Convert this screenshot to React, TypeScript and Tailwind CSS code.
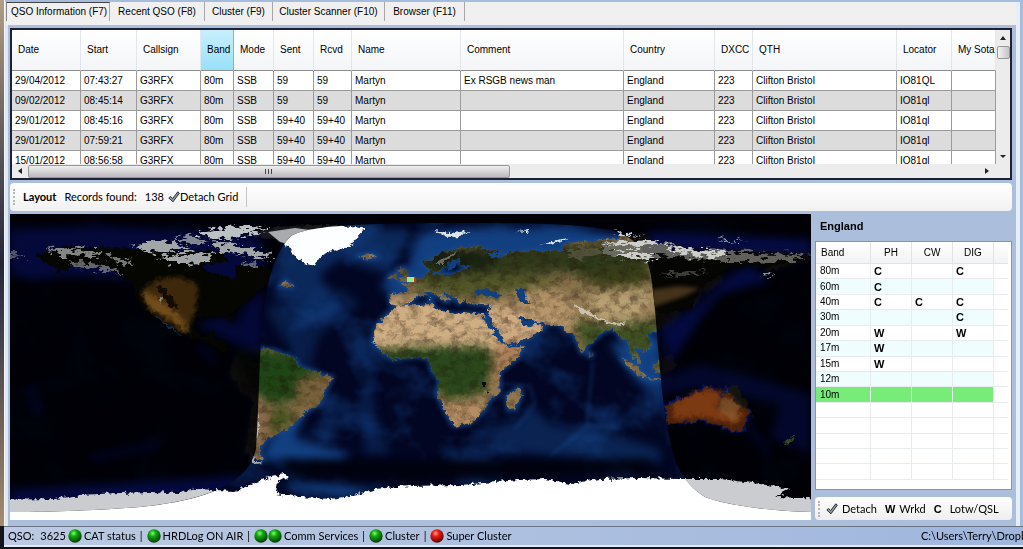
import { useState } from 'react';

interface Qso {
  id: number;
  date: string;
  start: string;
  rst: string;
  comment: string;
  locator: string;
}

interface BandStatus {
  band: string;
  ph: string;
  cw: string;
  dig: string;
}

const tabs = [
  { label: 'QSO Information (F7)', width: 'w-[104px]' },
  { label: 'Recent QSO (F8)', width: 'w-[95px]' },
  { label: 'Cluster (F9)', width: 'w-[68px]' },
  { label: 'Cluster Scanner (F10)', width: 'w-[112px]' },
  { label: 'Browser (F11)', width: 'w-[80px]' },
];

const columns = [
  { name: 'Date', width: 'w-[69px]' },
  { name: 'Start', width: 'w-[56px]' },
  { name: 'Callsign', width: 'w-[64px]' },
  { name: 'Band', width: 'w-[33px]' },
  { name: 'Mode', width: 'w-[40px]' },
  { name: 'Sent', width: 'w-[40px]' },
  { name: 'Rcvd', width: 'w-[38px]' },
  { name: 'Name', width: 'w-[109px]' },
  { name: 'Comment', width: 'w-[163px]' },
  { name: 'Country', width: 'w-[91px]' },
  { name: 'DXCC', width: 'w-[38px]' },
  { name: 'QTH', width: 'w-[144px]' },
  { name: 'Locator', width: 'w-[55px]' },
  { name: 'My Sota', width: '' },
];

const qsos: Qso[] = [
  { id: 1, date: '29/04/2012', start: '07:43:27', rst: '59', comment: 'Ex RSGB news man', locator: 'IO81QL' },
  { id: 2, date: '09/02/2012', start: '08:45:14', rst: '59', comment: '', locator: 'IO81ql' },
  { id: 3, date: '29/01/2012', start: '08:45:16', rst: '59+40', comment: '', locator: 'IO81ql' },
  { id: 4, date: '29/01/2012', start: '07:59:21', rst: '59+40', comment: '', locator: 'IO81ql' },
  { id: 5, date: '15/01/2012', start: '08:56:58', rst: '59+40', comment: '', locator: 'IO81ql' },
];

const bands: BandStatus[] = [
  { band: '80m', ph: 'C', cw: '', dig: 'C' },
  { band: '60m', ph: 'C', cw: '', dig: '' },
  { band: '40m', ph: 'C', cw: 'C', dig: 'C' },
  { band: '30m', ph: '', cw: '', dig: 'C' },
  { band: '20m', ph: 'W', cw: '', dig: 'W' },
  { band: '17m', ph: 'W', cw: '', dig: '' },
  { band: '15m', ph: 'W', cw: '', dig: '' },
  { band: '12m', ph: '', cw: '', dig: '' },
  { band: '10m', ph: '', cw: '', dig: '' },
  { band: '', ph: '', cw: '', dig: '' },
  { band: '', ph: '', cw: '', dig: '' },
  { band: '', ph: '', cw: '', dig: '' },
  { band: '', ph: '', cw: '', dig: '' },
  { band: '', ph: '', cw: '', dig: '' },
];

// Outlines as lon,lat pairs
const AFRICA = 'M-6,36 0,36 10,37 11,34 20,31 25,32 33,31 37,22 43,12 51,12 48,5 40,-3 40,-15 35,-20 33,-26 27,-33 20,-35 18,-32 14,-22 12,-16 13,-8 9,-1 9,4 4,6 -8,4.5 -13,9 -17,15 -16,21 -13,28 -9,32Z';
const EURASIA =
  'M-9,43 -9,37 -6,36 -1,37 3,42 7,43.5 10,44 12,42 16,38 18,40 13,45 19,42 22,37 24,40 27,37 36,36 35,31 39,22 43,13 53,17 60,23 56,26 51,24 48,30 56,27 62,25 67,25 70,21 73,20 77,8 80,13 87,21 92,22 95,16 98,15 99,8 103,1 103,5 100,13 105,9 109,12 106,20 114,22 121,28 121,32 118,38 125,39 127,35 129,37 130,42 140,49 140,54 136,55 143,59 155,59 162,61 156,51 163,57 170,60 180,63 180,69 160,70 140,72.5 130,71 113,74 105,78 88,75 70,73 68,68 55,69 44,67 40,64 33,67 41,67 30,70.5 22,70 14,67 5,61 8,58 12,56 17,61 22,65 22,60 28,60 20,55 10,54 10,57 8,57 8,54 2,51 -4,48.5 -1,46 -2,43.5Z';
const SOUTH_AMERICA = 'M-78,8 -72,12 -62,10 -52,5 -50,0 -35,-6 -39,-15 -41,-22 -48,-27 -53,-34 -58,-38 -65,-42 -68,-50 -66,-55 -74,-51 -73,-38 -70,-20 -76,-14 -81,-5 -80,0Z';
const ISLANDS =
  'M-5,50 1,51 0,53 -2,56 -3,58.5 -6,57 -3,54 -5,52Z M-10,52 -6,52 -6,55 -9,54Z M-24,65.5 -18,66.5 -14,65 -19,63.5Z M44,-25 43,-17 49,-12 50,-16 47,-25Z M95,5 100,2 106,-5 104,-6 98,0Z M80,9 82,7 80,6Z M109,1 117,7 119,1 115,-4 110,-3Z M106,-6 114,-7 114,-8 106,-7Z M9,41 9.5,39 8.5,39Z M-56,51 -53,47 -59,47.5Z';
const NORTH_AMERICA =
  'M-168,66 -156,71 -130,70 -110,68 -95,68 -85,68 -82,62 -94,60 -92,57 -82,53 -79,52 -78,60 -65,59 -56,52 -65,48 -70,43 -76,36 -81,31 -80,25 -83,30 -90,29.5 -97,28 -97,22 -94,18 -88,21 -88,16 -83,15 -83,10 -78,8 -85,10 -95,16 -105,20 -112,30 -110,23 -115,30 -121,35 -124,42 -124,48 -135,58 -150,60 -160,55 -158,58 -165,62Z';
const AUSTRALIA = 'M114,-22 122,-18 129,-15 132,-11 136,-12 136,-15 140,-17 142,-11 146,-19 153,-26 150,-37 145,-38 138,-35 131,-32 124,-33 115,-34Z';
const GREENLAND = 'M-73,78 -62,82 -45,83.5 -32,83.5 -20,82 -22,79 -24,76 -26,73 -30,70 -38,67 -41,64 -43,59.5 -49,61.5 -53,66 -54,70 -60,75Z';
const LAND = [AFRICA, EURASIA, SOUTH_AMERICA, ISLANDS].join(' ');

// Outlines in map pixels
const ANTARCTICA =
  'M-20,286 45,285 70,281 110,279 140,278 170,279 185,275 225,277 240,271 258,264 275,260 279,262 268,268 266,279 290,283 320,285 340,282 365,275 400,272 450,271 510,266 535,265 560,270 590,265 630,264 670,265 710,265 750,270 780,275 765,283 820,285 820,330 -20,330Z';
const NIGHT =
  'M0,0H801V298C760,297 715,291 695,283 C672,268 664,250 658,216 C651,180 648,130 645,96 C641,50 638,26 600,16 C570,10 520,9 460,9 C370,9 300,10 281,22 C265,38 255,70 252,110 C249,150 249,190 246,235 C238,272 190,287 130,293 C80,297 30,298 0,298Z';

function WorldMap() {
  const geo = 'translate(400.5 153) scale(2.225 -1.7)';
  return (
    <svg className="block h-[306px] w-full bg-[#01030f]" viewBox="0 0 801 306" preserveAspectRatio="none" role="img" aria-label="World map">
      <defs>
        <filter id="rough" x="-5%" y="-5%" width="110%" height="110%" colorInterpolationFilters="sRGB">
          <feTurbulence type="fractalNoise" baseFrequency="0.2" numOctaves="3" seed="4" />
          <feDisplacementMap in="SourceGraphic" scale="7" xChannelSelector="R" yChannelSelector="G" />
        </filter>
        <filter id="streaks" x="-5%" y="-5%" width="110%" height="110%" colorInterpolationFilters="sRGB">
          <feTurbulence type="fractalNoise" baseFrequency="0.12 0.26" numOctaves="3" seed="9" />
          <feDisplacementMap in="SourceGraphic" scale="16" xChannelSelector="R" yChannelSelector="G" />
          <feGaussianBlur stdDeviation="0.5" />
        </filter>
        <filter id="soft" x="-30%" y="-30%" width="160%" height="160%" colorInterpolationFilters="sRGB">
          <feGaussianBlur stdDeviation="5" />
        </filter>
        <filter id="coast" x="-20%" y="-20%" width="140%" height="140%" colorInterpolationFilters="sRGB">
          <feGaussianBlur stdDeviation="2" />
        </filter>
        <filter id="terrain" x="0" y="0" width="100%" height="100%" colorInterpolationFilters="sRGB">
          <feTurbulence type="fractalNoise" baseFrequency="0.1 0.16" numOctaves="4" seed="12" />
          <feColorMatrix values="0 0 0 0 0.1  0 0 0 0 0.06  0 0 0 0 0.02  2.4 0 0 0 -1" />
        </filter>
        <filter id="sea" x="0" y="0" width="100%" height="100%" colorInterpolationFilters="sRGB">
          <feTurbulence type="fractalNoise" baseFrequency="0.018 0.022" numOctaves="4" seed="21" />
          <feColorMatrix values="0 0 0 0 0.07  0 0 0 0 0.24  0 0 0 0 0.5  3.4 0 0 0 -1.6" />
        </filter>
        <clipPath id="land">
          <path d={LAND} transform={geo} />
        </clipPath>
        <clipPath id="night">
          <path d={NIGHT} />
        </clipPath>
      </defs>

      <rect width="801" height="306" fill="#020622" />
      <rect width="801" height="306" filter="url(#sea)" opacity="0.6" />
      <g filter="url(#soft)" fill="#123f80">
        <path d="M410,20 450,14 560,14 610,22 640,40 520,50 430,45 420,75 385,85 370,70 400,50Z" />
        <path d="M270,20 330,14 400,16 380,60 330,45 310,60 320,85 265,85Z" opacity="0.6" />
        <path d="M255,95 300,80 330,75 350,90 330,105 310,120 300,150 330,190 310,200 290,150Z" opacity="0.4" />
        <path d="M250,245 260,225 290,180 300,185 285,225 340,240 330,250 270,248Z" />
        <path d="M360,150 365,200 380,240 355,240 350,190Z" opacity="0.4" />
        <path d="M520,190 540,210 600,220 650,235 650,250 560,245 480,235 480,215 510,205Z" opacity="0.5" />
        <path d="M600,130 650,120 652,180 630,170 610,145Z" />
        <path d="M268,272 335,284 370,275 300,268Z" />
      </g>
      <path d="M583,146 577,212M490,170 520,172 525,190 505,215M540,242 577,212 610,213" fill="none" stroke="#2a62ad" strokeWidth="2" opacity="0.4" filter="url(#coast)" />
      <path d="M280,120 300,105 330,92M285,130 290,160 310,180" fill="none" stroke="#2a62ad" strokeWidth="6" opacity="0.15" filter="url(#soft)" />
      <path d="M270,246H640L650,258 530,262 400,268 280,262Z" fill="#01020e" filter="url(#soft)" />
      <g filter="url(#coast)">
        <path d={LAND} transform={geo} fill="#164b92" stroke="#164b92" strokeWidth="2" strokeLinejoin="round" opacity="0.85" />
      </g>

      <g filter="url(#rough)">
        <g clipPath="url(#land)">
          <rect width="801" height="306" fill="#8e7650" />
          <g filter="url(#soft)">
            {/* deserts */}
            <path d="M355,86 430,86 485,96 510,140 470,134 355,134Z" fill="#cfae83" />
            <path d="M470,88 510,95 550,115 500,140 480,120Z" fill="#cfab82" />
            <path d="M500,75 545,75 575,100 560,118 520,105Z" fill="#b6966a" />
            <path d="M575,80 640,75 645,90 620,110 590,108Z" fill="#b8a073" />
            {/* forest and savanna */}
            <path d="M355,137 400,133 475,132 488,150 470,180 440,188 415,165 370,158Z" fill="#2b481c" />
            <path d="M488,130 520,128 500,155 480,175 482,150Z" fill="#ab8058" />
            <path d="M418,188 470,184 480,205 450,225 430,210Z" fill="#b58d62" />
            <path d="M380,62 430,66 500,60 640,58 640,30 480,28 420,40Z" fill="#30391b" />
            <path d="M400,75 450,85 500,78 560,68 500,58 410,66Z" fill="#525628" />
            <path d="M560,60 640,52 640,70 590,74Z" fill="#3b4019" />
            <path d="M562,105 600,112 650,105 650,160 620,140 580,148Z" fill="#405225" />
            <path d="M420,28 480,40 490,50 430,60 410,40Z" fill="#172112" />
            <path d="M220,130 290,140 320,150 295,185 262,190 240,175Z" fill="#1f4415" />
            <path d="M285,168 325,150 318,185 290,200Z" fill="#77603a" />
            <path d="M245,190 262,188 258,238 245,245Z" fill="#8b6c4b" />
            <path d="M262,192 290,200 275,215 258,220Z" fill="#46501f" />
          </g>
          <rect width="801" height="306" filter="url(#terrain)" opacity="0.42" />
        </g>
        <g transform={geo} fill="#12407f">
          <path d="M28,45 30,42 38,41 41,42 37,45 33,46Z" />
          <path d="M47,46 52,46 51,42 54,37 50,37 48,42Z" />
          <path d="M17,56 20,59 22,65 18,62 16,58Z" />
          <path d="M32,30 35,28 43,14 41,14 34,25Z" />
          <path d="M49,30 51,27 56,26 54,24 50,26Z" />
        </g>
        <path d="M471,168h5v4h-5zM476,175l2,6 1,-1zM486,184l2,6h-1z" fill="#05080c" />
      </g>

      {/* ice and mountains */}
      <g filter="url(#rough)">
        <path d={GREENLAND} transform={geo} fill="#fdfeff" />
        <path d="M424,17 440,19 460,17 450,22 438,23Z M529,32 545,26 560,24 545,29Z M505,17 520,16 518,18Z" fill="#dfe6ea" />
        <path d="M562,89 570,93 590,105 612,110 618,106 612,112 592,108 570,97Z" fill="#c9c3b2" />
        <path d="M425,50 445,38 450,37 432,50Z" fill="#6c6b60" />
        <path d="M237,232 244,250 254,249 246,247Z M247,200 250,213 245,230Z" fill="#d4cfc7" opacity="0.8" />
      </g>
      <path d={ANTARCTICA} fill="#fff" filter="url(#rough)" />

      {/* night side */}
      <path d={NIGHT} fill="#000003" opacity="0.9" />
      <g clipPath="url(#night)">
        <g filter="url(#soft)" fill="#050d50">
          <path d="M0,15 90,12 250,20 255,60 200,75 120,65 60,62 20,66 0,60Z" opacity="0.7" />
          <path d="M185,110 215,102 225,112 235,90 255,75 252,140 215,125Z" opacity="0.65" />
          <path d="M645,165 690,150 730,160 801,180 801,240 760,225 770,190 700,175 645,180Z" opacity="0.5" />
          <path d="M650,115 690,90 720,60 740,52 760,66 710,80 690,105 660,150Z" opacity="0.8" />
          <path d="M640,18 801,26 801,40 640,34Z" opacity="0.9" />
          <path d="M0,276 240,262 240,280 0,290Z" opacity="0.8" />
        </g>
        <path d="M20,170 30,200M720,190 760,240M190,130 205,150M80,245 150,230" fill="none" stroke="#06105a" strokeWidth="8" opacity="0.3" filter="url(#soft)" />
        <g filter="url(#rough)">
          <path d={NORTH_AMERICA} transform={geo} fill="#050602" />
          <path d="M644,45 730,38 801,42 780,50 720,54 690,75 680,95 650,100 640,85Z" fill="#050503" />
        </g>
        <g filter="url(#rough)">
          <path d="M146,66 165,62 188,70 186,95 177,120 160,110 142,95 130,78Z" fill="#3d280c" filter="url(#coast)" />
          <path d="M133,76 143,82 155,90 172,104 178,120 160,104 138,94Z" fill="#80571f" filter="url(#coast)" opacity="0.8" />
          <path d="M146,74 154,72 164,88 170,96 160,92Z" fill="#140b04" />
          <path d="M150,84 153,82 152,90Z" fill="#9a8c78" />
          <path d="M145,100 160,112 172,122 158,114Z" fill="#1a3f66" opacity="0.7" />
        </g>
        <path d="M640,76 668,72 690,74 675,82 640,94Z" fill="#70502a" filter="url(#coast)" opacity="0.6" />
        <g filter="url(#streaks)" fill="#a2a6a6">
          <path d="M122,32 140,27 165,28 180,35 160,38 135,37Z" />
          <path d="M186,18 225,12 262,14 240,20 215,25 195,24Z" fill="#bcc1c4" />
          <path d="M146,44 170,40 205,39 200,48 165,49Z" />
          <path d="M200,28 225,30 250,36 262,44 245,42 215,38Z" />
          <path d="M165,22 185,23 198,29 180,31Z" opacity="0.8" />
          <path d="M38,36 60,34 98,38 85,42 50,41Z" opacity="0.8" />
          <path d="M98,41 110,44 124,50 112,50 100,46Z" opacity="0.7" />
          <path d="M58,47 90,50 118,60 90,56 65,53Z" opacity="0.6" />
          <path d="M0,38 20,42 15,45 0,42Z" opacity="0.5" />
          <path d="M228,50 245,48 248,52 235,53Z" opacity="0.6" />
        </g>
        <path d="M258,18 285,14 300,16 285,32 270,28Z" fill="#b8bbbd" opacity="0.9" />
        <g filter="url(#rough)">
          <path d={AUSTRALIA} transform={geo} fill="#4b220a" stroke="#050f56" strokeWidth="1" />
          <path d="M663,190 685,178 712,176 705,195 735,200 725,210 690,202 664,205Z" fill="#7c3a12" filter="url(#coast)" />
          <path d="M712,182 730,190 725,208 708,198Z" fill="#8a5d33" filter="url(#coast)" opacity="0.7" />
          <path d="M718,174 724,188 742,198 744,208 738,192 728,172Z" fill="#1c1b08" opacity="0.7" />
          <path d="M775,229 781,224 786,221 780,228 774,231Z" fill="#3a4a1a" />
        </g>
        <path d={ANTARCTICA} fill="#cbcccf" filter="url(#rough)" />
      </g>

      {/* Siberian snow crosses the terminator */}
      <g filter="url(#streaks)">
        <path d="M590,30 610,26 640,28 680,33 720,37 765,40 801,42 780,47 730,48 700,46 650,42 610,42 595,39Z" fill="#77766f" opacity="0.8" />
        <path d="M592,29 640,26 655,30 620,33Z M605,40 630,38 650,44 615,45Z M655,32 690,34 720,41 700,44 665,38Z" fill="#cdcdca" />
        <path d="M555,37 590,34 595,42 560,43Z" fill="#67614e" opacity="0.6" />
        <path d="M650,60 680,57 700,58 670,62Z" fill="#8e8e8a" opacity="0.4" />
        <path d="M606,18 622,21 632,23 615,22Z" fill="#c8ced2" />
        <path d="M704,25 735,27 720,29Z M756,63 763,56 760,65Z" fill="#8b8f92" />
      </g>

      {/* home marker */}
      <rect x="397" y="63" width="6" height="5" fill="#8df08f" />
      <rect x="403" y="63" width="2" height="5" fill="#e6e04a" />
      <rect x="404" y="63" width="2" height="5" fill="#d8261c" />
    </svg>
  );
}

function CheckIcon() {
  return (
    <svg className="h-3 w-3 shrink-0" viewBox="0 0 12 12">
      <path d="M0.8,7 2.6,5.4 4.6,7.6 9.8,0.8 11.3,2.2 5,10.8Z" fill="#8d99a6" stroke="#2e3338" strokeWidth="1" strokeLinejoin="round" />
    </svg>
  );
}

function Led({ color }: { color: 'green' | 'red' }) {
  const id = `led-${color}`;
  return (
    <svg className="h-[14px] w-[14px] shrink-0" viewBox="0 0 14 14">
      <defs>
        <radialGradient id={id} cx="0.4" cy="0.3" r="0.7">
          <stop offset="0" stopColor={color === 'green' ? '#7dff6a' : '#ff9a8a'} />
          <stop offset="0.35" stopColor={color === 'green' ? '#12a810' : '#ec1c10'} />
          <stop offset="1" stopColor={color === 'green' ? '#033c04' : '#5e0303'} />
        </radialGradient>
      </defs>
      <circle cx="7" cy="7" r="6.7" fill={`url(#${id})`} />
    </svg>
  );
}

function Grip() {
  return <span className="h-4 w-0 border-l-2 border-dotted border-[#b9b4b0]" />;
}

function Arrow({ d }: { d: string }) {
  return (
    <svg className="h-2 w-2" viewBox="0 0 8 8">
      <path d={d} fill="#222" />
    </svg>
  );
}

function QsoGrid() {
  return (
    <div className="flex flex-col border-2 border-[#1d2138] bg-white">
      <div className="flex h-[134px]">
        <div className="min-w-0 flex-1 overflow-hidden">
          <table className="w-full table-fixed border-separate border-spacing-0 whitespace-nowrap text-left">
            <thead>
              <tr className="h-[41px] bg-linear-to-b from-white to-[#f3f5f8]">
                {columns.map((col) => (
                  <th
                    key={col.name}
                    className={`${col.width} overflow-hidden border-r border-b border-b-[#8e8e8e] p-0 pl-1.5 font-normal ${
                      col.name === 'Band' ? 'border-r-[#7fb6d6] bg-linear-to-b from-[#c9effd] to-[#97e0fa]' : 'border-r-[#e3e6ea]'
                    }`}
                  >
                    {col.name}
                  </th>
                ))}
              </tr>
            </thead>
            <tbody>
              {qsos.map((qso, i) => (
                <tr key={qso.id} className={`h-5 ${i % 2 ? 'bg-[#dcdcdc]' : 'bg-white'}`}>
                  {[qso.date, qso.start, 'G3RFX', '80m', 'SSB', qso.rst, qso.rst, 'Martyn', qso.comment, 'England', '223', 'Clifton Bristol', qso.locator, ''].map(
                    (value, c) => (
                      <td key={c} className="overflow-hidden border-r border-b border-[#9b9b9b] p-0 pl-[3px]">
                        {value}
                      </td>
                    )
                  )}
                </tr>
              ))}
            </tbody>
          </table>
        </div>
        <div className="flex w-[14px] flex-col items-center bg-[#ececec]">
          <button className="flex h-4 w-full items-center justify-center" aria-label="Scroll up">
            <Arrow d="M4,2 7,6H1Z" />
          </button>
          <div className="h-[13px] w-[13px] rounded-xs border border-[#979797] bg-linear-to-r from-[#f4f4f4] to-[#c4c4c8]" />
          <button className="mt-auto flex h-4 w-full items-center justify-center" aria-label="Scroll down">
            <Arrow d="M1,3H7L4,6Z" />
          </button>
        </div>
      </div>
      <div className="flex h-[14px] items-center bg-[#ececec] pr-[15px]">
        <button className="flex w-4 items-center justify-center" aria-label="Scroll left">
          <Arrow d="M6,1V7L2,4Z" />
        </button>
        <div className="flex h-[13px] w-[49%] items-center justify-center gap-px rounded-xs border border-[#979797] bg-linear-to-b from-[#f0f0f0] to-[#bcb8be]">
          <span className="h-[5px] w-0.5 border-l border-[#444]" />
          <span className="h-[5px] w-0.5 border-l border-[#444]" />
          <span className="h-[5px] w-0.5 border-l border-[#444]" />
        </div>
        <button className="ml-auto flex w-4 items-center justify-center" aria-label="Scroll right">
          <Arrow d="M2,1V7L6,4Z" />
        </button>
      </div>
    </div>
  );
}

function BandPanel() {
  return (
    <aside className="flex w-[197px] shrink-0 flex-col">
      <h2 className="h-[27px] pt-1 pl-[5px] text-[11px] leading-4 font-bold">England</h2>
      <div className="h-[249px] overflow-hidden border border-[#8795ab] bg-white pr-[3px]">
        <table className="h-[238px] w-full table-fixed border-separate border-spacing-0 text-left leading-[14px]">
          <thead>
            <tr className="h-[22px] bg-linear-to-b from-white to-[#f1f2f4]">
              <th className="w-[55px] border-r border-b border-[#e0e3e8] p-0 pl-[5px] font-normal">Band</th>
              <th className="w-[41px] border-r border-b border-[#e0e3e8] p-0 text-center font-normal">PH</th>
              <th className="w-[41px] border-r border-b border-[#e0e3e8] p-0 text-center font-normal">CW</th>
              <th className="w-[41px] border-r border-b border-[#e0e3e8] p-0 text-center font-normal">DIG</th>
              <th className="border-b border-[#e0e3e8] p-0" />
            </tr>
          </thead>
          <tbody>
            {bands.map((row, i) => {
              const fill = row.band === '10m' ? 'bg-[#78ec78]' : row.band && i % 2 ? 'bg-[#effdff]' : '';
              return (
                <tr key={i} className="h-[15px]">
                  <td className={`border-r border-b border-[#e9ecef] p-0 pl-1 ${fill}`}>{row.band || '\u00a0'}</td>
                  {[row.ph, row.cw, row.dig].map((mark, c) => (
                    <td key={c} className={`border-r border-b border-[#e9ecef] p-0 pl-[3px] text-[11px] font-bold ${fill}`}>
                      {mark}
                    </td>
                  ))}
                  <td className="border-b border-[#e9ecef] p-0" />
                </tr>
              );
            })}
          </tbody>
        </table>
      </div>
      <div className="mt-[7px] flex h-[23px] items-center rounded-sm bg-linear-to-b from-white to-[#eeeeee] pl-[3px] font-[Lato,sans-serif] text-[11px]">
        <Grip />
        <button className="ml-[6px] flex items-center gap-1">
          <CheckIcon />
          Detach
        </button>
        <b className="ml-2 font-['Liberation_Sans',sans-serif]">W</b>
        <span className="ml-1">Wrkd</span>
        <b className="ml-2 font-['Liberation_Sans',sans-serif]">C</b>
        <span className="ml-2">Lotw/QSL</span>
      </div>
    </aside>
  );
}

export default function App() {
  const [activeTab, setActiveTab] = useState(0);

  return (
    <div className="flex min-h-screen flex-col overflow-hidden bg-[#14141c] font-['Liberation_Sans',sans-serif] text-[10px] leading-4 text-black">
      <div className="flex">
        <div className="w-1 shrink-0 bg-linear-to-b from-[#b39e84] via-[#23253a] to-[#a58c6c]" />
        <div className="min-w-0 flex-1 border-l border-[#f4f6f8] bg-[#a6bcdc] pt-0.5">
          <div className="flex">
            <div className="min-w-0 flex-1 border-l border-[#dfe8f2]">
              <nav className="flex h-[23px] items-start bg-[#f0f0f0]">
                {tabs.map((tab, i) => (
                  <button
                    key={tab.label}
                    onClick={() => setActiveTab(i)}
                    className={`${tab.width} h-[19px] border-r border-r-[#a8a8a8] whitespace-nowrap ${
                      i === activeTab ? 'border-t border-l border-t-[#444] border-l-[#888] pl-1 text-left' : 'text-center'
                    }`}
                  >
                    {tab.label}
                  </button>
                ))}
              </nav>
              <div className="border-l-2 border-[#dfe9f4] bg-[#abbfdc] pt-[3px] pr-1 pb-1.5 pl-0.5">
                <QsoGrid />
                <div className="mt-[3px] flex h-7 items-center rounded-sm bg-linear-to-b from-white to-[#f1f1f1] pl-[3px] font-[Lato,sans-serif] text-[11px]">
                  <Grip />
                  <b className="ml-2">Layout</b>
                  <span className="ml-2">Records found:</span>
                  <span className="ml-2">138</span>
                  <button className="ml-1 flex h-5 items-center border-r border-[#c4c4c4] pr-2">
                    <CheckIcon />
                    Detach Grid
                  </button>
                </div>
                <div className="mt-[3px] flex gap-1">
                  <div className="min-w-0 flex-1">
                    <WorldMap />
                  </div>
                  <BandPanel />
                </div>
              </div>
            </div>
            <div className="w-[7px] shrink-0 border-l-4 border-[#e6eef8]" />
          </div>
        </div>
      </div>
      <footer className="ml-1 flex h-[21px] items-center gap-0.5 border-t border-b-2 border-t-[#6c7484] border-b-[#e4eaf4] bg-linear-to-r from-[#bccae2] to-[#9fb6dd] pl-1 font-[Lato,sans-serif] text-[11px] whitespace-nowrap">
        <span>QSO:</span>
        <span className="ml-1">3625</span>
        <Led color="green" />
        <span>CAT status</span>
        <span className="mx-0.5">|</span>
        <Led color="green" />
        <span>HRDLog ON AIR</span>
        <span className="mx-0.5">|</span>
        <div className="flex">
          <Led color="green" />
          <Led color="green" />
        </div>
        <span>Comm Services</span>
        <span className="mx-0.5">|</span>
        <Led color="green" />
        <span>Cluster</span>
        <span className="mx-0.5">|</span>
        <Led color="red" />
        <span>Super Cluster</span>
        <span className="ml-auto w-[102px] shrink-0 overflow-hidden">C:\Users\Terry\Dropb</span>
      </footer>
    </div>
  );
}
